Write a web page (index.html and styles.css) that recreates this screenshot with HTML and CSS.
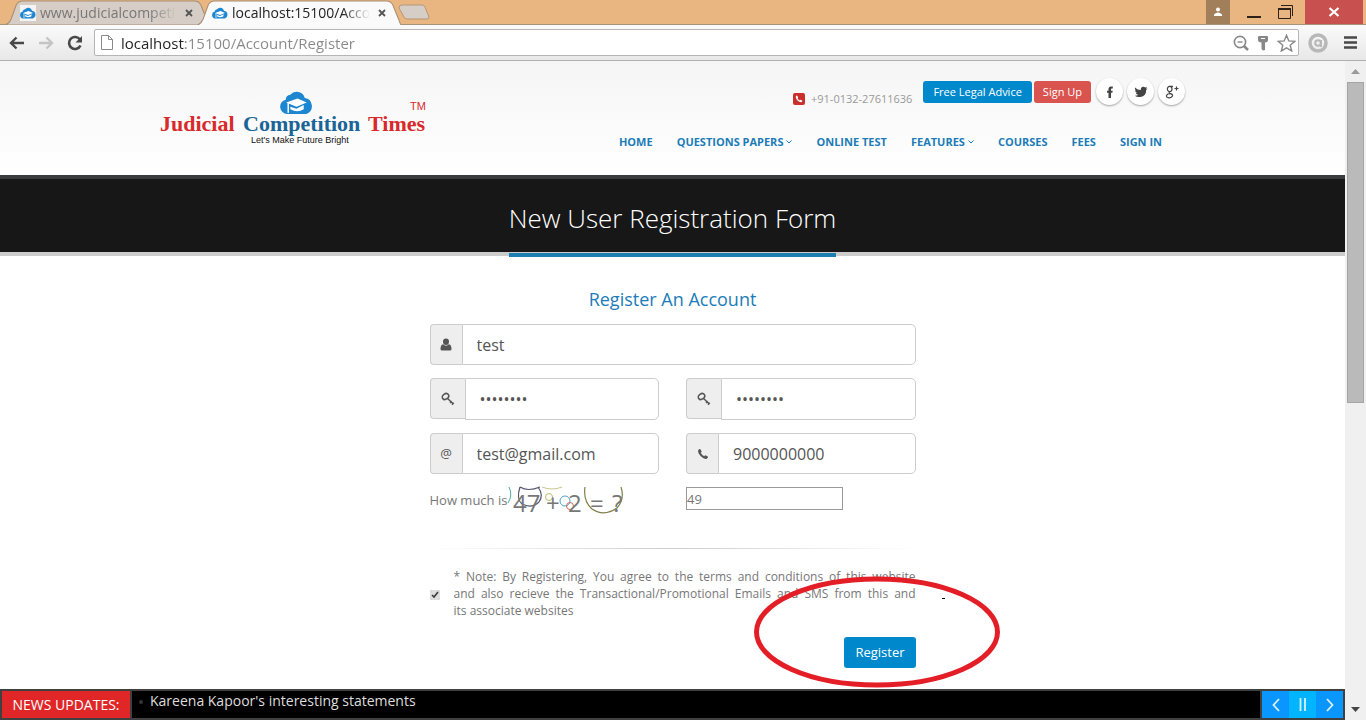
FILE: index.html
```html
<!DOCTYPE html>
<html lang="en">
<head>
<meta charset="utf-8">
<title>New User Registration Form</title>
<link rel="stylesheet" href="styles.css">
</head>
<body>
<svg class="defs" aria-hidden="true">
  <symbol id="cloud" viewBox="0 0 32 24">
    <path fill="#1c86d1" d="M7 24a7 7 0 0 1-1.500-13.800A5 5 0 0 1 10 5.500 8 8 0 0 1 24 8.500a8 8 0 0 1 1.500 15.500z"/>
    <path fill="#fff" d="M6 13l11-4 9 4-10 4zM10 17l6 2 7-3.500v4q-6 4-13 0z"/>
    <path fill="none" stroke="#fff" stroke-width="1.500" d="M8 13.500V23"/>
  </symbol>
  <symbol id="key" viewBox="0 0 14 14">
    <g fill="none" stroke="#555" stroke-width="1.500"><ellipse cx="4.500" cy="4.500" rx="3.400" ry="2.700" transform="rotate(-35 4.500 4.500)"/><path d="M6.500 6.500L12 11.500M9 11l1.800-1.800M11 12.700l1.800-1.900"/></g>
  </symbol>
  <symbol id="handset" viewBox="0 0 12 12">
    <path d="M1.200 2.300Q2.300.6 3.200 1L4.700 3.500Q4.700 4 3.800 4.800 4.800 7 7.200 8.200 8 7.200 8.600 7.300L11 8.700Q11.300 9.600 9.700 10.700 7.500 11.700 3.800 8.300.5 4.800 1.200 2.300z"/>
  </symbol>
</svg>

<div class="tabstrip">
  <div class="tabs">
    <div class="tab">
      <svg class="tab-shape" viewBox="0 0 202 25" preserveAspectRatio="none"><path d="M0 25Q5 24 7 19L12 5Q14 1 18 1H187Q191 1 193 5L199 20Q200 24 202 25z" fill="#d6cec6" stroke="#a88d72"/></svg>
      <span class="favicon boxed"><svg><use href="#cloud"/></svg></span>
      <span class="tab-title">www.judicialcompeti</span>
      <button class="tab-close" aria-label="Close tab"><svg viewBox="0 0 8 8"><path d="M1 1l6 6M7 1L1 7"/></svg></button>
    </div>
    <div class="tab active">
      <svg class="tab-shape" viewBox="0 0 202 25" preserveAspectRatio="none"><path d="M0 26Q5 24 7 19L12 5Q14 1 18 1H187Q191 1 193 5L199 20Q200 24 202 26z" fill="#fafafa" stroke="#a88d72"/></svg>
      <span class="favicon"><svg><use href="#cloud"/></svg></span>
      <span class="tab-title">localhost:15100/Acco</span>
      <button class="tab-close" aria-label="Close tab"><svg viewBox="0 0 8 8"><path d="M1 1l6 6M7 1L1 7"/></svg></button>
    </div>
    <button class="new-tab" aria-label="New tab"><svg viewBox="0 0 32 16"><path d="M4 1H24Q26 1 27 3L31 13Q31 15 29 15H9Q7 15 6 13L1 4Q1 1 4 1z" fill="#d6cec6" stroke="#b3977a"/></svg></button>
  </div>
  <div class="window-buttons">
    <button class="profile" aria-label="Profile"><svg viewBox="0 0 10 10"><circle cx="5" cy="2.500" r="2"/><path d="M1 9V7.500Q3 5.500 5 5.500T9 7.500V9z"/></svg></button>
    <button class="minimize" aria-label="Minimize"><svg viewBox="0 0 14 16"><path d="M0 13h14" stroke="#2b2118" stroke-width="2"/></svg></button>
    <button class="restore" aria-label="Restore"><svg viewBox="0 0 16 16"><path d="M3 1.500H14.500V12M.5 4.500H12.500V14.500H.5z" fill="none" stroke="#2b2118"/><path d="M0 5h13" stroke="#2b2118" stroke-width="2"/></svg></button>
    <button class="close" aria-label="Close"><svg viewBox="0 0 12 10"><path d="M1.500 1l9 8M10.500 1l-9 8" stroke="#fff" stroke-width="2.200"/></svg></button>
  </div>
</div>

<div class="toolbar">
  <button aria-label="Back"><svg class="nav-icon" viewBox="0 0 16 14"><path d="M15 7H2M7.500 1.500L2 7l5.500 5.500" fill="none" stroke="#484848" stroke-width="2.400"/></svg></button>
  <button aria-label="Forward"><svg class="nav-icon" viewBox="0 0 16 14"><path d="M1 7H14M8.500 1.500L14 7l-5.500 5.500" fill="none" stroke="#c4c4c4" stroke-width="2.400"/></svg></button>
  <button aria-label="Reload"><svg class="nav-icon reload" viewBox="0 0 16 16"><path d="M13 4.500A6 6 0 1 0 13.500 10.500" fill="none" stroke="#484848" stroke-width="2.600"/><path d="M15 1v6.500H8.500z" fill="#484848"/></svg></button>
  <div class="omnibox">
    <svg class="page-icon" viewBox="0 0 12 15"><path d="M.5.500H7.500L11.500 4.500V14.500H.5zM7.500.5V4.500H11.500" fill="#fff" stroke="#8a8a8a"/></svg>
    <input class="url" type="text" aria-label="Address" value="localhost:15100/Account/Register">
    <button aria-label="Zoom"><svg width="16" height="16" viewBox="0 0 16 16"><path d="M11 11l4 4" stroke="#888" stroke-width="2.500"/><circle cx="7" cy="7" r="5.600" fill="none" stroke="#888" stroke-width="1.600"/><path d="M4.500 7h5" stroke="#888" stroke-width="1.400"/></svg></button>
    <button aria-label="Saved passwords"><svg width="12" height="16" viewBox="0 0 12 16"><path d="M1 2Q1 1 2 1H10Q11 1 11 2V5Q11 7 8 7.500V15L6 15.500 4.500 14V7.500Q1 7 1 5z" fill="#888"/><path d="M4 3.500h4" stroke="#fff"/></svg></button>
    <button aria-label="Bookmark"><svg width="19" height="18" viewBox="0 0 19 18"><path d="M9.500 1.300l2.300 5.600 6 .4-4.600 3.900 1.500 5.800-5.200-3.200L4.300 17l1.500-5.800L1.200 7.300l6-.4z" fill="#fff" stroke="#888" stroke-width="1.400"/></svg></button>
  </div>
  <button class="extension" aria-label="Extension"><svg width="20" height="20" viewBox="0 0 20 20"><circle cx="10" cy="10" r="8" fill="none" stroke="#b8b8b8" stroke-width="3.500"/><circle cx="10" cy="10" r="2.800" fill="none" stroke="#b8b8b8" stroke-width="2"/><path d="M13 7v7" stroke="#b8b8b8" stroke-width="2"/></svg></button>
  <button aria-label="Menu"><svg width="13" height="13" viewBox="0 0 13 13"><path d="M0 1.500h13M0 6.500h13M0 11.500h13" stroke="#484848" stroke-width="2.600"/></svg></button>
</div>

<div class="viewport">
  <div class="page">
    <header class="site-header">
      <div class="container">
        <a class="logo" href="#" aria-label="Judicial Competition Times">
          <svg width="268" height="60" viewBox="0 0 268 60">
            <svg x="120" y="1" width="33" height="25"><use href="#cloud"/></svg>
            <g class="logo-name"><text x="0" y="43" fill="#d8292b">Judicial</text><text x="83" y="43" fill="#1a6496">Competition</text><text x="208" y="43" fill="#d8292b">Times</text></g>
            <text class="logo-tm" x="250" y="22" fill="#d8292b">TM</text>
            <text class="logo-tagline" x="91" y="55">Let's Make Future Bright</text>
          </svg>
        </a>
        <div class="header-side">
          <div class="header-top">
            <span class="phone"><svg width="12" height="12" viewBox="0 0 12 12"><rect width="12" height="12" rx="2" fill="#c9302c"/><use href="#handset" x="2" y="2" width="8" height="8" fill="#fff"/></svg>+91-0132-27611636</span>
            <a class="small-button blue" href="#">Free Legal Advice</a>
            <a class="small-button red" href="#">Sign Up</a>
            <a class="social first" href="#" aria-label="Facebook"><svg viewBox="0 0 14 14"><path d="M5.500 13V7.800H4V5.800H5.500V4Q5.500 1.500 8 1.500H9.800V3.500H8.800Q8 3.500 8 4.300V5.800H9.700L9.400 7.800H8V13z"/></svg></a>
            <a class="social" href="#" aria-label="Twitter"><svg viewBox="0 0 14 14"><path d="M1 2.500Q3.500 5 6.800 5 6.500 2.200 9.200 1.800 10.300 1.700 11.200 2.600L13 2 12 3.700 13.600 3.500 12.200 5Q12.200 11 6.500 12 3 12.400.7 10.800 3 10.900 4.300 9.800 2.300 9.500 1.800 8H3Q1 7 1 5.200L2 5.500Q.3 4.200 1 2.500z"/></svg></a>
            <a class="social" href="#" aria-label="Google Plus"><svg viewBox="0 0 14 14"><g fill="none" stroke="#444" stroke-width="1.200"><ellipse cx="4.700" cy="4" rx="2.300" ry="2.700"/><path d="M4.500 1.300H8M5 6.700Q3 8 5.500 8.600 8 9.500 7.500 11 6.500 13 4 12.800 1 12.500 1.500 10.500 2.500 8.600 5.500 8.700M9.500 3.500h4M11.500 1.500v4"/></g></svg></a>
          </div>
          <nav class="main-nav">
            <a href="#">HOME</a>
            <a href="#">QUESTIONS PAPERS<svg viewBox="0 0 6 4"><path d="M.5.500L3 3 5.500.5"/></svg></a>
            <a href="#">ONLINE TEST</a>
            <a href="#">FEATURES<svg viewBox="0 0 6 4"><path d="M.5.500L3 3 5.500.5"/></svg></a>
            <a href="#">COURSES</a>
            <a href="#">FEES</a>
            <a href="#">SIGN IN</a>
          </nav>
        </div>
      </div>
    </header>

    <section class="page-title"><h1>New User Registration Form</h1></section>

    <main>
      <form class="register">
        <h2>Register An Account</h2>
        <div class="field">
          <label for="user"><svg width="12" height="13" viewBox="0 0 12 13" aria-label="User name"><path fill="#555" d="M6 .5A3 3 0 0 1 9 3.500Q9 7 6 7T3 3.500A3 3 0 0 1 6 .5zM3 6.300Q6 9 9 6.300 11.500 7 11.500 11 11.500 12.500 10 12.500H2Q.5 12.500.5 11 .5 7 3 6.300z"/></svg></label>
          <input id="user" type="text" value="test">
        </div>
        <div class="pair">
          <div class="field wide"><label for="pass"><svg width="14" height="14" aria-label="Password"><use href="#key"/></svg></label><input id="pass" type="password" value="testtest"></div>
          <div class="field wide"><label for="confirm"><svg width="14" height="14" aria-label="Confirm password"><use href="#key"/></svg></label><input id="confirm" type="password" value="testtest"></div>
        </div>
        <div class="pair">
          <div class="field"><label for="email">@</label><input id="email" type="text" value="test@gmail.com"></div>
          <div class="field"><label for="mobile"><svg width="12" height="12" fill="#555" aria-label="Phone"><use href="#handset"/></svg></label><input id="mobile" type="text" value="9000000000"></div>
        </div>
        <div class="pair captcha">
          <label for="answer">How much is
            <svg width="118" height="27" viewBox="0 0 118 27">
              <g fill="none">
                <path d="M1 0Q5 8 0 16" stroke="#4fb0a5"/>
                <path d="M12 0Q20 5 32 0M12 0Q8 12 14 17 24 22 31 15 36 8 30 0" stroke="#55556e" stroke-width="1.200"/>
                <path d="M34 0Q44 4 54 0" stroke="#c6c98a"/>
                <path d="M77 0Q75 14 84 22 96 30 109 21 117 12 113 0" stroke="#7f8048" stroke-width="1.200"/>
                <circle cx="41" cy="10" r="3.500" stroke="#b8ba68"/><circle cx="57" cy="14" r="5" stroke="#4aa3c9"/><circle cx="62" cy="19" r="3.500" stroke="#c96a5a"/>
              </g>
              <g class="captcha-text"><text x="5" y="25">47</text><text x="38" y="25">+</text><text x="60" y="25">2</text><text x="82" y="25">=</text><text x="104" y="25">?</text></g>
            </svg>
          </label>
          <input id="answer" type="text" value="49">
        </div>
        <hr>
        <div class="note">
          <input id="agree" type="checkbox" checked>
          <label for="agree">* Note: By Registering, You agree to the terms and conditions of this website and&nbsp;also recieve the Transactional/Promotional Emails and SMS from this and its&nbsp;associate websites</label>
        </div>
        <div class="actions"><button class="submit" type="button">Register</button></div>
        <svg class="annotation" width="248" height="112" viewBox="0 0 248 112"><ellipse cx="124" cy="56" rx="120.500" ry="53" fill="none" stroke="#e31e26" stroke-width="5"/><path d="M189 22.500h3" stroke="#000"/></svg>
      </form>
    </main>

    <footer class="ticker">
      <strong>NEWS UPDATES:</strong>
      <ul><li>Kareena Kapoor's interesting statements</li></ul>
      <div class="ticker-controls">
        <button aria-label="Previous"><svg viewBox="0 0 8 14"><path d="M7 1L1.500 7 7 13"/></svg></button>
        <button class="pause" aria-label="Pause"><svg viewBox="0 0 8 14"><path d="M1.500 0v13M6 0v13"/></svg></button>
        <button aria-label="Next"><svg viewBox="0 0 8 14"><path d="M1 1l5.500 6L1 13"/></svg></button>
      </div>
    </footer>
  </div>
  <div class="scrollbar" aria-hidden="true">
    <svg width="9" height="5" viewBox="0 0 9 5"><path d="M0 5L4.500 0 9 5z" fill="#999"/></svg>
    <div class="track"><div class="thumb"></div></div>
    <svg width="9" height="5" viewBox="0 0 9 5"><path d="M0 0h9L4.500 5z" fill="#444"/></svg>
  </div>
</div>
</body>
</html>
```
FILE: styles.css
```css
* { box-sizing: border-box; }
body {
  margin: 0;
  min-height: 100vh;
  display: flex;
  flex-direction: column;
  font: 13px/17px "Open Sans", sans-serif;
  color: #777;
  background: #fff;
}
button { border: 0; padding: 0; background: none; font: inherit; display: flex; align-items: center; justify-content: center; }
a { color: #1c7cb8; text-decoration: none; }
.defs { position: absolute; width: 0; height: 0; }

/* Browser window */
.tabstrip { display: flex; justify-content: space-between; height: 25px; background: #e9b581; border-bottom: 1px solid #a9927c; }
.tabs { display: flex; padding-left: 4px; }
.tab { position: relative; display: flex; align-items: center; gap: 4px; width: 206px; height: 25px; padding: 0 13px 0 16px; margin-right: -14px; }
.tab.active { z-index: 1; }
.tab-shape { position: absolute; inset: 0; width: 100%; height: 100%; }
.favicon { position: relative; display: flex; align-items: center; width: 16px; height: 16px; }
.favicon.boxed { background: #f4f4f4; }
.favicon svg { width: 16px; height: 13px; }
.tab-title {
  position: relative; flex: 1; white-space: nowrap; font-size: 14px; line-height: 20px; color: #777;
  mask-image: linear-gradient(90deg, #000 80%, transparent);
}
.active .tab-title { color: #222; }
.tab-close { position: relative; width: 16px; height: 16px; }
.tab-close svg { width: 8px; height: 8px; fill: none; stroke: #555; stroke-width: 1.8; }
.new-tab { margin: 0 0 0 10px; }
.new-tab svg { width: 32px; height: 16px; }
.window-buttons { display: flex; padding-right: 3px; }
.profile { width: 24px; background: #a17f5b; }
.profile svg { width: 10px; height: 10px; fill: #fff; }
.minimize { width: 48px; }
.minimize svg { width: 14px; height: 16px; }
.restore { width: 27px; justify-content: flex-start; }
.restore svg { width: 16px; height: 16px; }
.close { width: 58px; background: #c8504f; }
.close svg { width: 12px; height: 10px; }

.toolbar { display: flex; align-items: center; gap: 13px; height: 36px; padding: 0 9px; background: linear-gradient(#fafafa, #e8e8e8); border-bottom: 1px solid #b0b0b0; }
.nav-icon { width: 16px; height: 14px; }
.nav-icon.reload { height: 16px; }
.omnibox { display: flex; flex: 1; align-items: center; gap: 8px; min-width: 0; height: 27px; padding: 0 2px 0 6px; margin-right: -4px; margin-left: -2px; background: #fff; border: 1px solid #b5b5b5; border-radius: 2px; }
.extension { margin-right: 3px; }
.page-icon { width: 12px; height: 15px; }
.url {
  flex: 1; min-width: 0; border: 0; padding: 0; outline: 0; font: 15px/22px "Open Sans", sans-serif;
  color: transparent; background: linear-gradient(90deg, #222 64px, #888 64px); background-clip: text; -webkit-background-clip: text;
}

.viewport { flex: 1; display: flex; }
.page { flex: 1; min-width: 0; display: flex; flex-direction: column; }
.scrollbar { width: 21px; padding: 8px 2px; display: flex; flex-direction: column; align-items: center; gap: 8px; background: #f0f0f0; }
.track { flex: 1; align-self: stretch; }
.thumb { height: 52%; background: #bababa; border: 1px solid #a5a5a5; }

/* Header */
.site-header { padding: 0 24px; background: linear-gradient(#f5f5f5, #fff); }
.container { display: flex; justify-content: space-between; max-width: 1025px; height: 114px; margin: 0 auto; }
.logo { margin-top: 27px; }
.logo-name { font: bold 22px "Liberation Serif", serif; }
.logo-tm { font: 11px "Liberation Sans", sans-serif; }
.logo-tagline { font: 9px "Liberation Sans", sans-serif; fill: #111; }
.header-side { display: flex; flex-direction: column; align-items: flex-end; gap: 27px; padding-top: 17px; }
.header-top { display: flex; gap: 2px; }
.phone { display: flex; align-items: center; gap: 6px; margin-right: 9px; padding-top: 13px; font-size: 11px; line-height: 16px; color: #999; }
.small-button { height: 22px; margin-top: 3px; padding: 0 10px; border-radius: 3px; font-size: 11px; line-height: 22px; color: #fff; }
.blue, .submit { background: #0088cc; }
.red { background: #d9534f; padding: 0 9px; }
.social { display: flex; align-items: center; justify-content: center; width: 27px; height: 27px; margin-left: 2px; border-radius: 50%; background: #fff; box-shadow: 0 1px 2px rgba(0, 0, 0, .35); }
.social.first { margin-left: 3px; }
.social svg { width: 14px; height: 14px; fill: #444; }
.main-nav { display: flex; gap: 24px; padding-right: 23px; font-size: 11px; font-weight: 700; line-height: 16px; white-space: nowrap; }
.main-nav a { display: flex; align-items: center; gap: 3px; }
.main-nav svg { width: 6px; height: 4px; fill: none; stroke: #1c7cb8; }

.page-title { display: flex; justify-content: center; border-top: 4px solid #383c3f; border-bottom: 4px solid #ccc; background: #171717; }
h1 { margin: 0 0 -5px; padding: 21px 0 17px; border-bottom: 4px solid #1c7fb3; font-size: 26px; font-weight: 300; line-height: 36px; color: #fff; }

/* Form */
main { flex: 1; padding: 32px 24px 21px; }
.register { position: relative; display: flex; flex-direction: column; gap: 13px; max-width: 486px; margin: 0 auto; }
h2 { margin: 0 0 1px; text-align: center; font-size: 18px; font-weight: 400; line-height: 22px; color: #1c7cb8; }
.field { display: flex; height: 41px; }
.field label { display: flex; align-items: center; justify-content: center; width: 32px; border: 1px solid #ccc; border-right: 0; border-radius: 4px 0 0 4px; background: #eee; color: #555; }
.field.wide label { width: 35px; height: 41px; }
.field.wide { height: 42px; }
.field input { flex: 1; min-width: 0; border: 1px solid #ccc; border-radius: 0 5px 5px 0; padding: 0 14px; background: #fff; font: 16px/24px "Open Sans", sans-serif; color: #555; }
.pair { display: grid; grid-template-columns: repeat(2, minmax(0, 1fr)); gap: 27px; }
.captcha label { display: flex; align-items: center; gap: 1px; white-space: nowrap; }
.captcha label svg { overflow: visible; }
.captcha input { width: 157px; height: 23px; padding: 0; border: 1px solid #999; font: 13px/17px "Open Sans", sans-serif; color: #777; }
.captcha-text { font: 24px "Open Sans", sans-serif; fill: #777; }
hr { width: 100%; height: 1px; margin: 21px 0 6px; border: 0; background: linear-gradient(90deg, transparent, #ccc, transparent); }
.note { display: flex; align-items: center; gap: 14px; text-align: justify; font-size: 12px; }
.note input { flex: none; width: 10px; height: 10px; margin: 3px 0 0; accent-color: #ddd; }
.actions { display: flex; justify-content: flex-end; margin-top: 5px; }
.submit { height: 31px; padding: 0 11px; border-radius: 3px; color: #fff; }
.annotation { position: absolute; right: -85px; bottom: -20px; pointer-events: none; }

/* Ticker */
.ticker { display: flex; gap: 2px; height: 31px; padding: 2px; background: #404040; }
.ticker strong { width: 128px; background: #e02626; color: #fff; font-size: 14px; font-weight: 400; line-height: 28px; text-align: center; white-space: nowrap; }
.ticker ul { flex: 1; margin: 0; padding: 0 0 0 18px; background: #000; font-size: 14px; line-height: 20px; color: #ddd; list-style: none; }
.ticker li { position: relative; }
.ticker li::before { content: ""; position: absolute; left: -11px; top: 9px; width: 4px; height: 4px; border-radius: 50%; background: #333; }
.ticker-controls { display: flex; }
.ticker-controls button { width: 27px; background: #0a96ff; }
.ticker-controls .pause { background: #00b4ff; }
.ticker-controls svg { width: 8px; height: 14px; fill: none; stroke: #d8f2ff; stroke-width: 1.8; }
```
